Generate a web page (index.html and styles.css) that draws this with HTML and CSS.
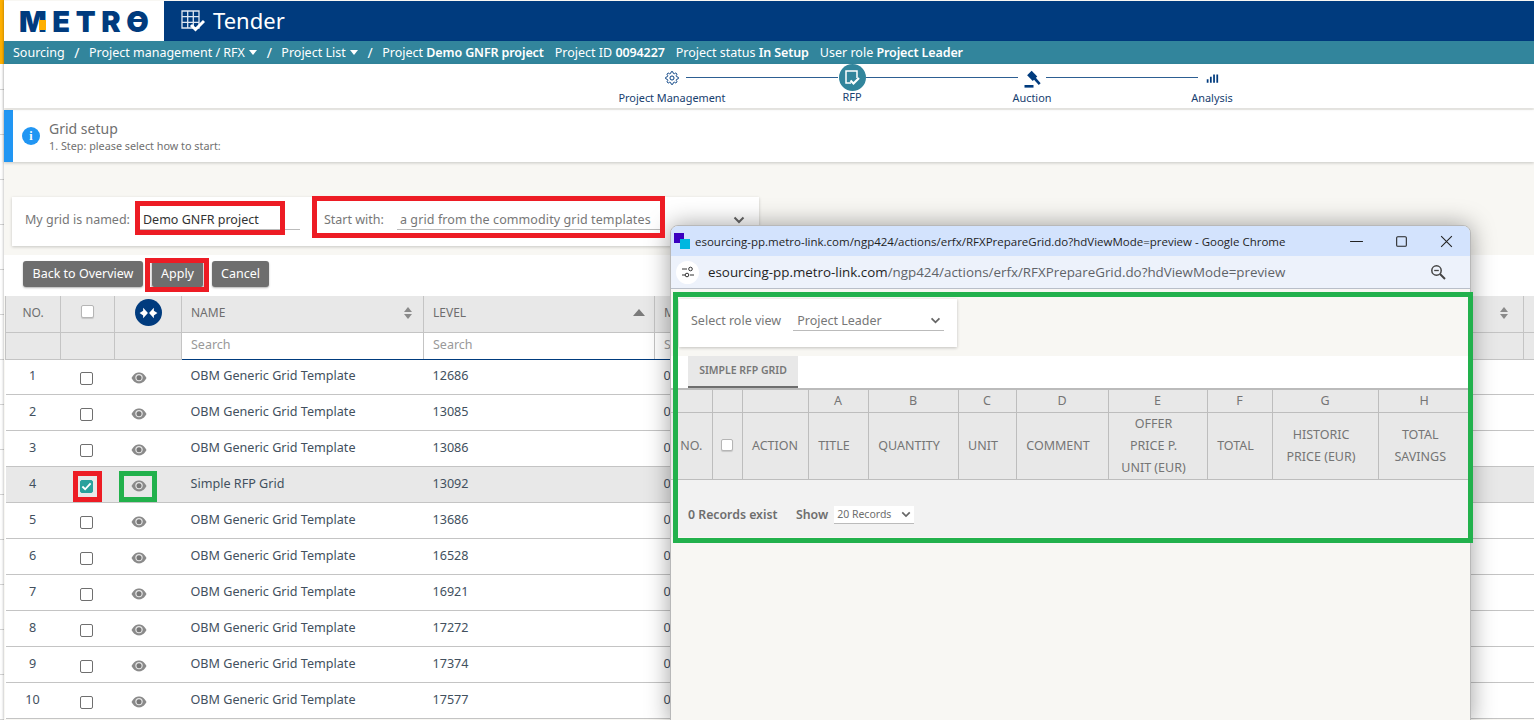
FILE: index.html
```html
<!DOCTYPE html>
<html lang="en">
<head>
<meta charset="utf-8">
<title>Tender - Grid setup</title>
<link rel="stylesheet" href="styles.css">
</head>
<body>
<svg class="defs" width="0" height="0" aria-hidden="true">
  <symbol id="eye" viewBox="0 0 16 12">
    <path d="M.5 6C3 1.600 5.500.6 8 .6s5 1 7.500 5.400C13 10.400 10.500 11.400 8 11.400S3 10.400.5 6z" fill="#8a8a8a"/>
    <circle cx="8" cy="5.600" r="3.700" fill="#e4e4e4"/>
    <circle cx="8" cy="5.800" r="2.500" fill="#777"/>
  </symbol>
  <symbol id="sort" viewBox="0 0 10 14">
    <path d="M5 1l4 5H1z" fill="#8a8a8a"/><path d="M5 13l4-5H1z" fill="#8a8a8a"/>
  </symbol>
  <symbol id="chev" viewBox="0 0 12 8">
    <path d="M1.500 1.500L6 6l4.500-4.500" fill="none" stroke="#666" stroke-width="2"/>
  </symbol>
</svg>
<div class="page">
  <aside class="rail"><div class="rail-accent"></div></aside>
  <main class="main">
    <header class="topbar">
      <div class="logo"><span class="logo-text">METRO</span><i class="logo-m"></i><i class="logo-o"></i></div>
      <div class="app">
        <svg class="app-icon" viewBox="0 0 24 22"><path d="M1 1h17v17H1zM1 6.700h17M1 12.300h17M6.700 1v17M12.300 1v17" fill="none" stroke="#dfe7f2" stroke-width="1.300"/><path d="M10 15l4.500 4.500L23 11" fill="none" stroke="#fff" stroke-width="3"/></svg>
        <span class="app-name">Tender</span>
      </div>
    </header>
    <nav class="crumbs">
      <span>Sourcing</span><span class="sl">/</span>
      <span>Project management / RFX <i class="caret"></i></span><span class="sl">/</span>
      <span>Project List <i class="caret"></i></span><span class="sl">/</span>
      <span>Project <b>Demo GNFR project</b></span>
      <span class="meta">Project ID <b>0094227</b></span>
      <span class="meta">Project status <b>In Setup</b></span>
      <span class="meta">User role <b>Project Leader</b></span>
    </nav>
    <section class="stepper">
      <div class="step step-line">
        <svg class="st-icon" viewBox="0 0 24 24"><path d="M19.400 15a1.650 1.650 0 0 0 .33 1.820l.06.06a2 2 0 0 1 0 2.830 2 2 0 0 1-2.830 0l-.06-.06a1.650 1.650 0 0 0-1.820-.33 1.650 1.650 0 0 0-1 1.510V21a2 2 0 0 1-2 2 2 2 0 0 1-2-2v-.09A1.650 1.650 0 0 0 9 19.400a1.650 1.650 0 0 0-1.820.33l-.06.06a2 2 0 0 1-2.830 0 2 2 0 0 1 0-2.830l.06-.06a1.650 1.650 0 0 0 .33-1.820 1.650 1.650 0 0 0-1.510-1H3a2 2 0 0 1-2-2 2 2 0 0 1 2-2h.09A1.650 1.650 0 0 0 4.600 9a1.650 1.650 0 0 0-.33-1.820l-.06-.06a2 2 0 0 1 0-2.830 2 2 0 0 1 2.830 0l.06.06a1.650 1.650 0 0 0 1.820.33H9a1.650 1.650 0 0 0 1-1.510V3a2 2 0 0 1 2-2 2 2 0 0 1 2 2v.09a1.650 1.650 0 0 0 1 1.510 1.650 1.650 0 0 0 1.820-.33l.06-.06a2 2 0 0 1 2.830 0 2 2 0 0 1 0 2.830l-.06.06a1.650 1.650 0 0 0-.33 1.820V9a1.650 1.650 0 0 0 1.510 1H21a2 2 0 0 1 2 2 2 2 0 0 1-2 2h-.09a1.650 1.650 0 0 0-1.510 1z" fill="none" stroke="#003b7e" stroke-width="1.700"/><circle cx="12" cy="12" r="3.500" fill="none" stroke="#003b7e" stroke-width="1.700"/></svg>
        <span class="st-label">Project Management</span>
      </div>
      <div class="step step-line">
        <span class="st-active"><svg viewBox="0 0 20 20"><path d="M9 15H4V3h11v7" fill="none" stroke="#fff" stroke-width="1.500"/><path d="M8.500 12.500l3 3L17 10" fill="none" stroke="#fff" stroke-width="2.200"/></svg></span>
        <span class="st-label">RFP</span>
      </div>
      <div class="step step-line">
        <svg class="st-icon st-gavel" viewBox="0 0 24 24"><g fill="#003b7e"><path d="M11.500 1L19 8.500 13 14.500 5.500 7z"/><path d="M13.500 11.500l2.500-2.500L23.500 17.500 21 20z"/><path d="M2 20h12v3.500H2z"/></g></svg>
        <span class="st-label">Auction</span>
      </div>
      <div class="step">
        <svg class="st-icon" viewBox="0 0 24 24"><path d="M3 14h3v6H3zM8.500 10h3v10h-3zM14 6h3v14h-3zM19.500 6h3v14h-3z" fill="#003b7e"/></svg>
        <span class="st-label">Analysis</span>
      </div>
    </section>
    <section class="notice">
      <span class="notice-i">i</span>
      <div>
        <div class="notice-title">Grid setup</div>
        <div class="notice-sub">1. Step: please select how to start:</div>
      </div>
    </section>
    <section class="filter">
      <span class="f-label">My grid is named:</span>
      <span class="f-name">Demo GNFR project</span>
      <span class="f-label f-start">Start with:</span>
      <span class="f-value">a grid from the commodity grid templates</span>
      <svg class="f-chev"><use href="#chev"/></svg>
    </section>
    <section class="toolbar">
      <button class="btn btn-back">Back to Overview</button>
      <button class="btn btn-apply">Apply</button>
      <button class="btn btn-cancel">Cancel</button>
    </section>
    <table class="grid">
      <colgroup>
        <col class="c-no"><col class="c-ck"><col class="c-eye"><col class="c-name"><col class="c-level"><col class="c-m"><col class="c-r"><col class="c-end">
      </colgroup>
      <thead>
        <tr class="h1">
          <th>NO.</th>
          <th><span class="box box-h"></span></th>
          <th><span class="merge"><svg viewBox="0 0 16 10"><path d="M.5 5L3.500 3V.5L7.500 5 3.500 9.500V7zM15.500 5L12.500 3V.5L8.500 5 12.500 9.500V7z" fill="#fff"/></svg></span></th>
          <th class="tl"><div class="thw">NAME<svg class="sort"><use href="#sort"/></svg></div></th>
          <th class="tl"><div class="thw">LEVEL<i class="asc"></i></div></th>
          <th class="tl">M</th>
          <th class="tl"><div class="thw thw-end"><svg class="sort"><use href="#sort"/></svg></div></th>
          <th></th>
        </tr>
        <tr class="h2">
          <th></th><th></th><th></th>
          <th class="srch">Search</th><th class="srch">Search</th><th class="srch">Search</th><th></th><th></th>
        </tr>
      </thead>
      <tbody>
        <tr><td class="tc tn">1</td><td class="tc tb"><span class="box"></span></td><td class="tc te"><svg class="eye"><use href="#eye"/></svg></td><td>OBM Generic Grid Template</td><td>12686</td><td>0</td><td></td><td></td></tr>
        <tr><td class="tc tn">2</td><td class="tc tb"><span class="box"></span></td><td class="tc te"><svg class="eye"><use href="#eye"/></svg></td><td>OBM Generic Grid Template</td><td>13085</td><td>0</td><td></td><td><i class="mark"></i></td></tr>
        <tr><td class="tc tn">3</td><td class="tc tb"><span class="box"></span></td><td class="tc te"><svg class="eye"><use href="#eye"/></svg></td><td>OBM Generic Grid Template</td><td>13086</td><td>0</td><td></td><td></td></tr>
        <tr class="sel"><td class="tc tn">4</td><td class="tc tb"><span class="box box-on"><svg viewBox="0 0 12 10"><path d="M1.500 5l3 3 6-6.500" fill="none" stroke="#fff" stroke-width="2"/></svg></span></td><td class="tc te"><svg class="eye"><use href="#eye"/></svg></td><td>Simple RFP Grid</td><td>13092</td><td>0</td><td></td><td><i class="mark"></i></td></tr>
        <tr><td class="tc tn">5</td><td class="tc tb"><span class="box"></span></td><td class="tc te"><svg class="eye"><use href="#eye"/></svg></td><td>OBM Generic Grid Template</td><td>13686</td><td>0</td><td></td><td><i class="mark"></i></td></tr>
        <tr><td class="tc tn">6</td><td class="tc tb"><span class="box"></span></td><td class="tc te"><svg class="eye"><use href="#eye"/></svg></td><td>OBM Generic Grid Template</td><td>16528</td><td>0</td><td></td><td></td></tr>
        <tr><td class="tc tn">7</td><td class="tc tb"><span class="box"></span></td><td class="tc te"><svg class="eye"><use href="#eye"/></svg></td><td>OBM Generic Grid Template</td><td>16921</td><td>0</td><td class="frag">5</td><td></td></tr>
        <tr><td class="tc tn">8</td><td class="tc tb"><span class="box"></span></td><td class="tc te"><svg class="eye"><use href="#eye"/></svg></td><td>OBM Generic Grid Template</td><td>17272</td><td>0</td><td></td><td></td></tr>
        <tr><td class="tc tn">9</td><td class="tc tb"><span class="box"></span></td><td class="tc te"><svg class="eye"><use href="#eye"/></svg></td><td>OBM Generic Grid Template</td><td>17374</td><td>0</td><td class="frag">7</td><td></td></tr>
        <tr><td class="tc tn">10</td><td class="tc tb"><span class="box"></span></td><td class="tc te"><svg class="eye"><use href="#eye"/></svg></td><td>OBM Generic Grid Template</td><td>17577</td><td>0</td><td></td><td></td></tr>
      </tbody>
    </table>
  </main>

  <div class="mark-box red r-name"></div>
  <div class="mark-box red r-start"></div>
  <div class="mark-box red r-apply"></div>
  <div class="mark-box red r-check"></div>
  <div class="mark-box green g-eye"></div>

  <section class="popup">
    <div class="w-title">
      <span class="favicon"><i></i><i></i></span>
      <span class="w-text">esourcing-pp.metro-link.com/ngp424/actions/erfx/RFXPrepareGrid.do?hdViewMode=preview - Google Chrome</span>
      <svg class="w-ctl" viewBox="0 0 14 14"><path d="M1 7h12" stroke="#222" stroke-width="1" fill="none"/></svg>
      <svg class="w-ctl" viewBox="0 0 14 14"><rect x="2.500" y="2.500" width="9" height="9" rx="1" stroke="#222" fill="none"/></svg>
      <svg class="w-ctl" viewBox="0 0 14 14"><path d="M2 2l10 10M12 2L2 12" stroke="#222" fill="none"/></svg>
    </div>
    <div class="w-addr">
      <span class="tune"><svg viewBox="0 0 14 14"><path d="M1 4h5M9 10h4M1 10h3" stroke="#333" fill="none"/><circle cx="9.500" cy="4" r="1.800" fill="none" stroke="#333"/><circle cx="6" cy="10" r="1.800" fill="none" stroke="#333"/></svg></span>
      <span class="w-url">esourcing-pp.metro-link.com<em>/ngp424/actions/erfx/RFXPrepareGrid.do?hdViewMode=preview</em></span>
      <svg class="zoomout" viewBox="0 0 16 16"><circle cx="6.500" cy="6.500" r="4.700" fill="none" stroke="#444" stroke-width="1.500"/><path d="M10 10l5 5" stroke="#444" stroke-width="2"/><path d="M4.200 6.500h4.600" stroke="#444" stroke-width="1.300"/></svg>
    </div>
    <div class="w-body">
      <div class="role">
        <span class="role-label">Select role view</span>
        <span class="role-select">Project Leader<svg class="role-chev"><use href="#chev"/></svg></span>
      </div>
      <div class="tabs"><span class="tab">SIMPLE RFP GRID</span></div>
      <table class="pgrid">
        <colgroup>
          <col class="p1"><col class="p2"><col class="p3"><col class="p4"><col class="p5"><col class="p6"><col class="p7"><col class="p8"><col class="p9"><col class="p10"><col class="p11">
        </colgroup>
        <thead>
          <tr class="ph1"><th></th><th></th><th></th><th>A</th><th>B</th><th>C</th><th>D</th><th>E</th><th>F</th><th>G</th><th>H</th></tr>
          <tr class="ph2"><th>NO.</th><th><span class="box box-h box-p"></span></th><th>ACTION</th><th>TITLE</th><th>QUANTITY</th><th>UNIT</th><th>COMMENT</th><th>OFFER<br>PRICE P.<br>UNIT (EUR)</th><th>TOTAL</th><th>HISTORIC<br>PRICE (EUR)</th><th>TOTAL<br>SAVINGS</th></tr>
        </thead>
      </table>
      <div class="pfoot">
        <span class="pcount">0 Records exist</span>
        <span class="pshow">Show</span>
        <span class="psel">20 Records<svg class="psel-chev"><use href="#chev"/></svg></span>
      </div>
    </div>
  </section>
  <div class="mark-box green g-popup"></div>
</div>
</body>
</html>
```
FILE: styles.css
```css
* { box-sizing: border-box; }
html, body { margin: 0; height: 720px; overflow: hidden; background: #f8f7f3; }
body { font-family: "Noto Sans", "Open Sans", sans-serif; color: #4b4b4b; }
.defs { position: absolute; }
.page { position: relative; display: flex; width: 1534px; height: 720px; overflow: hidden; }

.rail { width: 4px; flex: none; background: repeating-linear-gradient(#fff 0 44px, #d4d4d4 44px 45px); }
.rail-accent { height: 64px; background: #ffb000; }
.main { width: 1530px; flex: none; display: flex; flex-direction: column; box-shadow: 0 0 3px rgba(0,0,0,.35); }

.topbar { height: 40px; margin-top: 1px; flex: none; display: flex; }
.logo { position: relative; width: 160px; height: 40px; background: #fff; padding-left: 15px; display: flex; align-items: center; }
.logo-text { font-family: Inter, "Liberation Sans", sans-serif; font-weight: 900; font-size: 29px; letter-spacing: 5.600px; color: #003b7e; line-height: 1; }
.logo-m { position: absolute; left: 35px; top: 19px; width: 7px; height: 10px; background: #ffb000; }
.logo-o { position: absolute; left: 125px; top: 18px; width: 18px; height: 3px; background: #003b7e; }
.app { flex: 1; background: #003b7e; display: flex; align-items: center; padding-left: 17px; }
.app-icon { width: 24px; height: 22px; margin-right: 8px; }
.app-name { color: #fff; font-size: 22px; line-height: 1; margin-top: -2px; }

.crumbs { height: 23px; flex: none; background: #32859c; color: #fff; font-size: 12.500px; display: flex; align-items: center; padding: 0 0 1px 9px; white-space: nowrap; box-shadow: 0 1px 2px rgba(0,0,0,.15); z-index: 1; }
.crumbs b { font-weight: 600; letter-spacing: -.11px; }
.sl { margin: 0 9.500px; font-size: 14px; }
.caret { display: inline-block; width: 0; height: 0; border: 4px solid transparent; border-top: 5px solid #fff; border-bottom: 0; vertical-align: 2px; margin-left: 1px; }
.meta { margin-left: 11px; }

.stepper { height: 44px; flex: none; background: #fff; display: grid; grid-template-columns: repeat(4, 180px); padding-left: 578px; box-shadow: 0 1px 3px rgba(0,0,0,.12); z-index: 1; }
.step { position: relative; display: flex; flex-direction: column; align-items: center; }
.step-line::after { content: ""; position: absolute; left: calc(50% + 14px); width: 152px; top: 13px; height: 1px; background: #2d5f92; }
.st-icon { width: 14px; height: 14px; margin-top: 7px; margin-bottom: 6px; }
.st-gavel { width: 18px; height: 18px; margin-top: 6px; margin-bottom: 3px; }
.st-active { width: 27px; height: 27px; border-radius: 50%; background: #32859c; display: flex; align-items: center; justify-content: center; z-index: 1; margin-bottom: -1px; }
.st-active svg { width: 20px; height: 20px; }
.st-label { font-size: 10.900px; color: #17406f; line-height: 14px; white-space: nowrap; }

.notice { height: 52px; margin-top: 2px; flex: none; background: #fff; border-left: 9px solid #2196f3; display: flex; align-items: center; padding-left: 9px; box-shadow: 0 1px 3px rgba(0,0,0,.2); }
.notice-i { width: 18px; height: 18px; border-radius: 50%; background: #2196f3; color: #fff; font-size: 12px; font-weight: 700; display: flex; align-items: center; justify-content: center; margin-right: 9px; font-family: "Liberation Serif", serif; }
.notice-title { font-size: 14px; line-height: 18px; color: #707070; }
.notice-sub { font-size: 10.800px; line-height: 14px; margin-top: 1px; color: #707070; }

.filter { width: 747px; height: 49px; margin: 35px 0 0 8px; flex: none; background: #fff; box-shadow: 0 1px 3px rgba(0,0,0,.2); display: flex; align-items: center; font-size: 12.500px; padding: 0 0 4px 13px; }
.f-label { color: #777; white-space: nowrap; }
.f-name { width: 160px; margin-left: 10px; padding-left: 3px; height: 21px; line-height: 21px; border-bottom: 1px solid #bbb; color: #333; white-space: nowrap; }
.f-start { margin-left: 24px; }
.f-value { width: 265px; margin-left: 13px; padding-left: 3px; height: 21px; line-height: 21px; border-bottom: 1px solid #bbb; color: #777; white-space: nowrap; letter-spacing: .1px; }
.f-chev { width: 12px; height: 8px; margin-left: 71px; }
.f-label:first-child { line-height: 21px; }

.toolbar { height: 41px; margin-top: 9px; flex: none; background: #fff; display: flex; align-items: flex-start; padding: 6px 0 0 19px; gap: 8px; }
.btn { height: 26px; border: 0; border-radius: 3px; background: #6e6e6e; color: #fff; font-family: inherit; font-size: 12.500px; padding: 0 0 2px; box-shadow: 0 1px 2px rgba(0,0,0,.3); white-space: nowrap; }
.btn-back { width: 120px; }
.btn-apply { width: 53px; border-left: 1px solid #d8d8d8; border-right: 1px solid #d8d8d8; }
.btn-cancel { width: 57px; }

.grid { width: 1530px; table-layout: fixed; border-collapse: collapse; margin-left: 1px; background: #fff; font-size: 12.600px; }
.c-no { width: 55px; } .c-ck { width: 54px; } .c-eye { width: 67px; } .c-name { width: 242px; } .c-level { width: 231px; } .c-m { width: 446px; } .c-r { width: 423px; } .c-end { width: 11px; }
.grid th { background: #e8e8e8; border: 1px solid #c4c4c4; border-top: 0; font-weight: 400; color: #6e6e6e; text-align: center; padding: 0; font-size: 12px; }
.h1 th { height: 36px; padding-bottom: 2px; }
.h2 th { height: 27px; }
.grid th.tl { text-align: left; padding-left: 9px; }
.thw { display: flex; align-items: center; justify-content: space-between; padding-right: 10px; }
.thw-end { justify-content: flex-end; padding-right: 14px; }
.grid th.srch { background: #fff; text-align: left; padding: 0 0 2px 9px; color: #999; font-size: 12.500px; border-bottom: 1px solid #003b7e; }
.sort { width: 10px; height: 14px; }
.asc { width: 0; height: 0; border: 6px solid transparent; border-top: 0; border-bottom: 7px solid #7a7a7a; margin-right: -1px; }
.merge { display: inline-flex; width: 27px; height: 27px; border-radius: 50%; background: #003b7e; align-items: center; justify-content: center; vertical-align: middle; }
.merge svg { width: 19px; height: 12px; }
.grid td { height: 36px; border-bottom: 1px solid #c4c4c4; padding: 0 0 2px 9px; color: #42505e; white-space: nowrap; overflow: hidden; }
.grid td.tc { text-align: center; padding: 0; }
.grid td.tn { padding: 0 1px 2px 0; }
.grid td.tb { padding-right: 2px; }
.grid td.te { padding-right: 18px; }
.grid td.frag { text-align: right; padding-right: 53px; }
.grid tbody tr:first-child td { height: 35px; padding-bottom: 3px; }
.grid tbody tr:first-child td.tb, .grid tbody tr:first-child td.te { padding-bottom: 0; }
.sel td { background: #e8e8e8; }
.box { display: inline-block; width: 13px; height: 13px; border: 1px solid #6f6f6f; border-radius: 2px; background: #fff; vertical-align: middle; margin-top: 2px; }
.box-h { border-color: #b5b5b5; margin-top: -5px; box-shadow: 0 1px 1px rgba(0,0,0,.15); }
.box-on { background: #29a19c; border-color: #29a19c; }
.box-on svg { display: block; width: 11px; height: 11px; }
.eye { width: 16px; height: 12px; vertical-align: middle; margin-top: 1px; }
.mark { display: block; width: 2px; height: 1px; background: #e8a13c; margin-left: 9px; }

.mark-box { position: absolute; border-style: solid; border-width: 5px; z-index: 5; pointer-events: none; }
.red { border-color: #ed1c24; }
.green { border-color: #22b14c; }
.r-name { left: 135px; top: 201px; width: 150px; height: 34px; }
.r-start { left: 312px; top: 196px; width: 353px; height: 42px; }
.r-apply { left: 145px; top: 258px; width: 64px; height: 34px; }
.r-check { left: 73px; top: 471px; width: 29px; height: 31px; }
.g-eye { left: 119px; top: 471px; width: 38px; height: 31px; }
.g-popup { left: 673px; top: 292px; width: 800px; height: 251px; }

.popup { position: absolute; left: 670px; top: 225px; width: 801px; height: 500px; background: #f8f7f3; border: 1px solid #b8b8b8; border-radius: 8px 8px 0 0; box-shadow: 0 0 24px rgba(0,0,0,.38); z-index: 3; display: flex; flex-direction: column; overflow: hidden; }
.w-title { height: 30px; flex: none; background: #d3e3fd; display: flex; align-items: center; padding-left: 3px; font-family: "Open Sans", "Noto Sans", sans-serif; font-size: 11.500px; color: #1f1f1f; }
.favicon { position: relative; width: 16px; height: 16px; flex: none; margin-right: 5px; }
.favicon i { position: absolute; width: 10px; height: 10px; }
.favicon i:first-child { left: 0; top: 0; background: #3a00c0; }
.favicon i:last-child { left: 6px; top: 6px; background: #00b7e0; }
.w-text { width: 654px; white-space: nowrap; }
.w-ctl { width: 15px; height: 15px; flex: none; margin-left: 30px; }
.w-ctl:nth-of-type(1) { margin-left: 0; }
.w-addr { height: 33px; flex: none; background: #edf2fb; border-bottom: 1px solid #b9bfc9; display: flex; align-items: center; padding-left: 5px; font-family: "Open Sans", "Noto Sans", sans-serif; font-size: 13.370px; }
.tune { width: 23px; height: 23px; border-radius: 50%; background: #fff; display: flex; align-items: center; justify-content: center; flex: none; margin-right: 9px; }
.tune svg { width: 14px; height: 14px; }
.w-url { width: 722px; color: #1f1f1f; white-space: nowrap; }
.w-url em { font-style: normal; color: #5f6368; }
.zoomout { width: 16px; height: 16px; flex: none; }
.w-body { flex: 1; display: flex; flex-direction: column; }
.role { width: 278px; height: 48px; margin: 10px 0 0 8px; background: #fff; box-shadow: 0 1px 3px rgba(0,0,0,.22); display: flex; align-items: center; padding: 0 0 5px 12px; font-size: 12.500px; color: #777; flex: none; }
.role-label { white-space: nowrap; }
.role-select { position: relative; width: 151px; height: 21px; line-height: 19px; margin-left: 12px; padding-left: 4px; border-bottom: 1px solid #bbb; white-space: nowrap; display: flex; justify-content: space-between; align-items: center; padding-right: 3px; }
.role-chev { width: 11px; height: 7px; }
.tabs { height: 34px; margin-top: 9px; flex: none; background: #fff; padding-left: 17px; border-bottom: 2px solid #bbb; display: flex; }
.tab { width: 110px; height: 32px; background: #e8e8e8; border-bottom: 2px solid #6e6e6e; color: #777; font-size: 10.500px; font-weight: 600; display: flex; align-items: center; justify-content: center; white-space: nowrap; padding-bottom: 3px; }
.pgrid { width: 799px; table-layout: fixed; border-collapse: collapse; font-size: 12.500px; flex: none; }
.p1 { width: 41px; } .p2 { width: 30px; } .p3 { width: 66px; } .p4 { width: 60px; } .p5 { width: 90px; } .p6 { width: 58px; } .p7 { width: 92px; } .p8 { width: 99px; } .p9 { width: 65px; } .p10 { width: 106px; } .p11 { width: 92px; }
.pgrid th { background: #e8e8e8; border: 1px solid #bdbdbd; border-top: 0; border-left: 0; font-weight: 400; color: #757575; padding: 0; text-align: center; line-height: 22px; }
.pgrid th:last-child { border-right: 0; }
.ph1 th { height: 22px; }
.ph2 th { height: 67px; }
.ph2 th:nth-child(n+4) { padding-right: 8px; }
.ph2 { box-shadow: 0 2px 2px rgba(0,0,0,.2); }
.box-p { margin-top: -4px; width: 12px; height: 12px; }
.pfoot { height: 57px; flex: none; background: #f2f2f2; display: flex; align-items: center; padding: 12px 0 0 17px; font-size: 12.300px; color: #6e6e6e; }
.pcount { font-weight: 600; width: 108px; white-space: nowrap; }
.pshow { font-weight: 600; margin-right: 6px; }
.psel { width: 80px; height: 18px; background: #fff; border-bottom: 1px solid #bbb; font-size: 10.500px; display: flex; align-items: center; justify-content: space-between; padding: 0 3px; color: #6e6e6e; white-space: nowrap; }
.psel-chev { width: 10px; height: 7px; }
```
